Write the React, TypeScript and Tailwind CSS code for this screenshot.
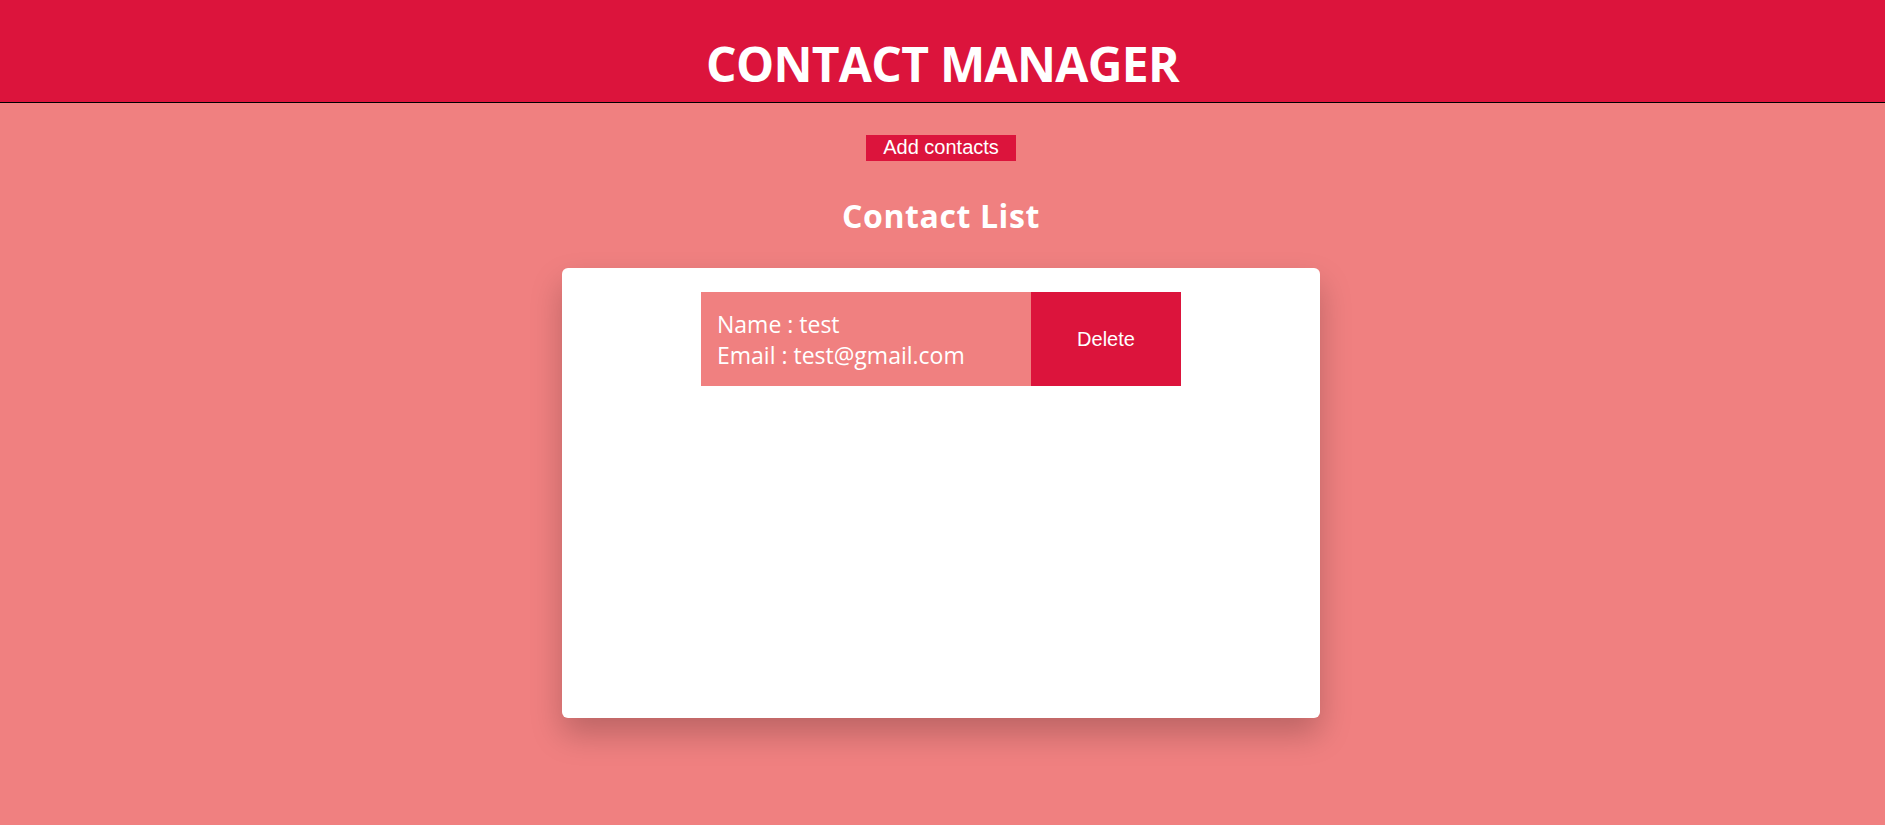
import React from 'react'

type Contact = {
  id: number
  name: string
  email: string
}

const contacts: Contact[] = [{ id: 1, name: 'test', email: 'test@gmail.com' }]

function ContactRow({ contact }: { contact: Contact }) {
  return (
    <div className="flex w-[480px] h-[94px]">
      <div className="flex-1 flex flex-col justify-center pl-4 pt-[2px] bg-[#f08080] text-white text-[23px] leading-[31px] font-['Open_Sans',sans-serif]">
        <div>Name : {contact.name}</div>
        <div>Email : {contact.email}</div>
      </div>
      <button className="w-[150px] flex items-center justify-center bg-[#dc143c] text-white text-[20px] leading-[23px] font-['Liberation_Sans',Arial,sans-serif]">
        Delete
      </button>
    </div>
  )
}

export default function App() {
  return (
    <div className="min-h-screen bg-[#f08080]">
      {/* Header */}
      <header className="h-[103px] bg-[#dc143c] border-b border-black text-center">
        <h1 className="pt-[40px] text-[48px] leading-[48px] tracking-[-0.7px] font-bold text-white font-['Open_Sans',sans-serif]">
          CONTACT MANAGER
        </h1>
      </header>

      <main className="flex flex-col items-center pr-[3px]">
        <button className="mt-[32px] w-[150px] h-[26px] flex items-center justify-center pb-[2px] bg-[#dc143c] text-white text-[20px] leading-[23px] font-['Liberation_Sans',Arial,sans-serif]">
          Add contacts
        </button>

        <h2 className="mt-[35px] text-[32px] leading-[40px] tracking-[0.6px] font-bold text-white font-['Open_Sans',sans-serif]">
          Contact List
        </h2>

        {/* Contact list card */}
        <div className="mt-[32px] w-[758px] h-[450px] pt-6 flex flex-col items-center gap-2 bg-white rounded-md shadow-[0_16px_32px_rgba(0,0,0,0.22)]">
          {contacts.map((c) => (
            <ContactRow key={c.id} contact={c} />
          ))}
        </div>
      </main>
    </div>
  )
}
